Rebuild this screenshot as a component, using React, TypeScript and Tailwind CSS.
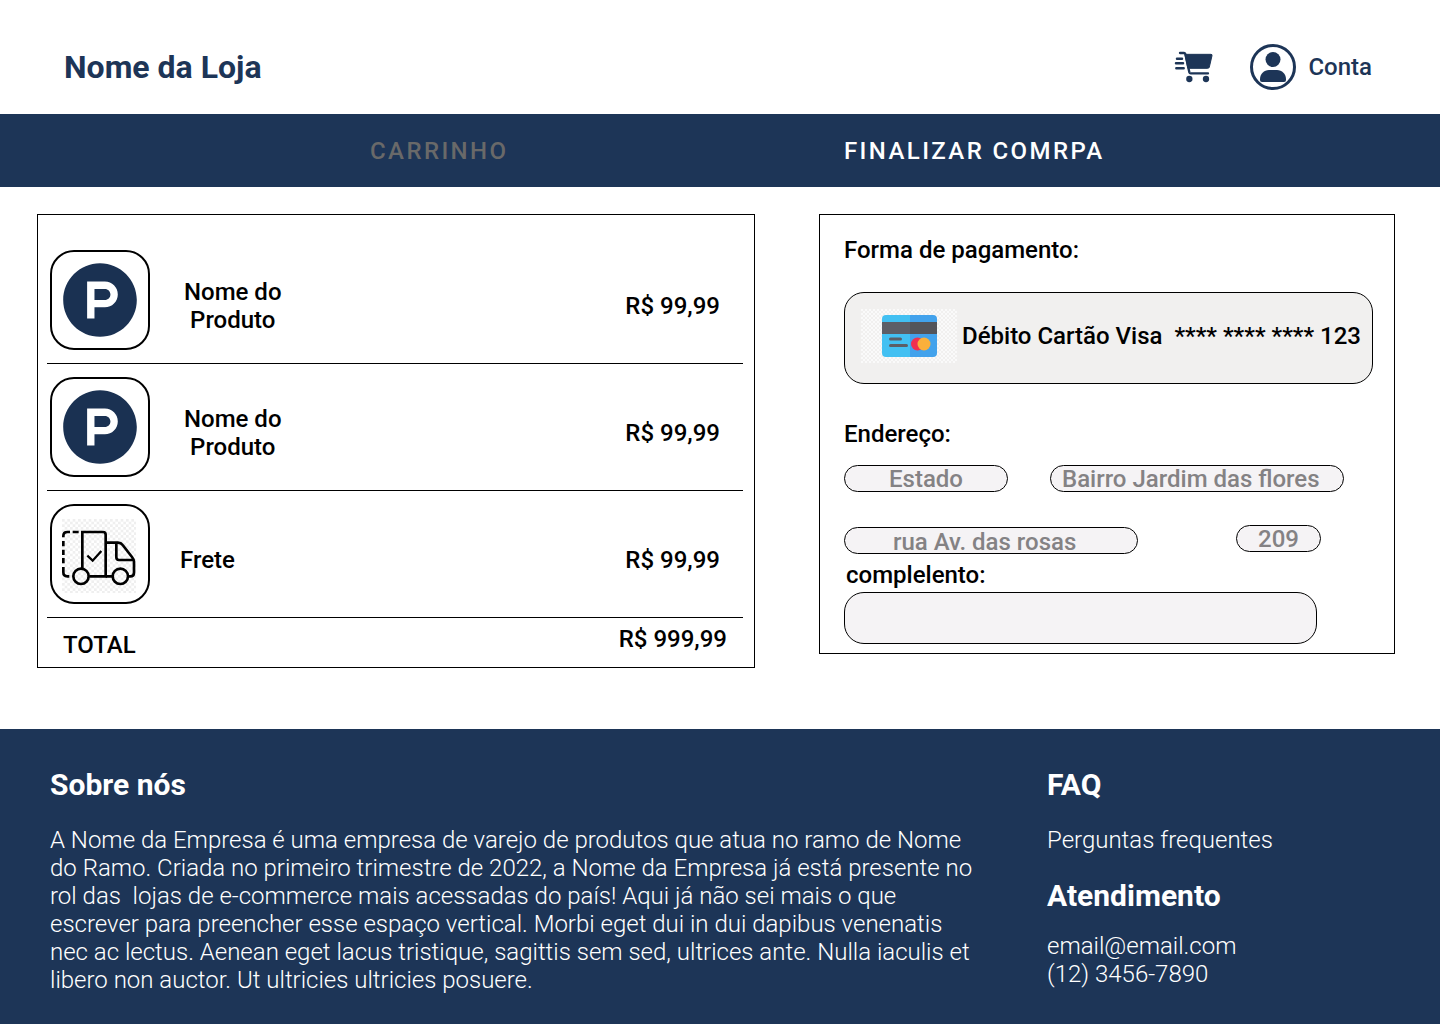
import { FaProductHunt } from "react-icons/fa";
import type { ReactNode } from "react";

function CartIcon() {
  return (
    <svg viewBox="0 0 132 102" className="h-[34px] w-[44px]" fill="none" stroke="currentColor" strokeLinecap="round" strokeLinejoin="round">
      <path d="M24 9h12q3 0 4 3l12 55q1 3 4 3h52" strokeWidth="7" />
      <path d="M40 13H117q4 0 3 4L112 51q-1 4-5 4H49Z" fill="currentColor" strokeWidth="3" />
      <path d="M15 26H30M12 40H33M13 55H35" strokeWidth="7.5" />
      <circle cx="52" cy="87" r="9.5" fill="currentColor" stroke="none" />
      <circle cx="102" cy="87" r="9.5" fill="currentColor" stroke="none" />
    </svg>
  );
}

function AccountIcon() {
  return (
    <svg viewBox="0 0 46 46" className="size-[46px]" fill="currentColor">
      <circle cx="23" cy="23" r="21.5" fill="none" stroke="currentColor" strokeWidth="3" />
      <circle cx="23" cy="15.5" r="7.5" />
      <path d="M10 36v-1c0-5 4-9 9-9h8c5 0 9 4 9 9v1q0 2-2 2H12q-2 0-2-2Z" />
    </svg>
  );
}

function TruckIcon() {
  return (
    <svg viewBox="0 0 222 222" className="mt-[3px] mr-0.5 size-[74px]" fill="none" stroke="#000" strokeWidth="8">
      <defs>
        <pattern id="truck-check" width="16" height="16" patternUnits="userSpaceOnUse">
          <path d="M0 0h8v8H0zM8 8h8v8H8z" fill="#efefef" stroke="none" />
        </pattern>
      </defs>
      <rect width="222" height="222" fill="url(#truck-check)" stroke="none" />
      <path d="M61 148V39h62q8 0 8 8v125H82" />
      <path d="M24 39h-8q-12 0-12 12v4M32 39h18M4 66v16M4 92v16M4 117v16M4 144v16M4 160q0 12 12 12h6" />
      <path d="M131 71h37q9 0 14 7l28 36q6 7 6 14v33q0 11-11 11h-6M163 71v44q0 8 8 8h44M131 172h20" />
      <circle cx="57" cy="172" r="23" />
      <circle cx="175" cy="172" r="23" />
      <path d="M76 110l16 15 26-29" strokeWidth="7" />
    </svg>
  );
}

function CreditCardIcon() {
  return (
    <svg viewBox="0 0 96 54" className="h-[54px] w-24">
      <defs>
        <pattern id="card-check" width="4" height="4" patternUnits="userSpaceOnUse">
          <path d="M0 0h2v2H0zM2 2h2v2H2z" fill="#fafafa" />
        </pattern>
        <clipPath id="card-shape">
          <rect x="21" y="6" width="55" height="42" rx="4" />
        </clipPath>
      </defs>
      <rect width="96" height="54" fill="url(#card-check)" />
      <g clipPath="url(#card-shape)">
        <path d="M21 6h28v42H21z" fill="#42c0f2" />
        <path d="M49 6h27v42H49z" fill="#42a2ec" />
        <path d="M21 13h28v12H21z" fill="#5c5e66" />
        <path d="M49 13h27v12H49z" fill="#53545a" />
      </g>
      <path d="M29.500 30h10M29.500 36.500h16" stroke="#5c5e66" strokeWidth="3" strokeLinecap="round" />
      <circle cx="56.500" cy="35" r="6.500" fill="#f03050" />
      <circle cx="63" cy="35" r="6.500" fill="#fbb03b" />
    </svg>
  );
}

function CartRow({ icon, name, price }: { icon: ReactNode; name: ReactNode; price: string }) {
  return (
    <li className="flex items-center border-b border-black py-[13px] pr-[23px] pl-[3px]">
      <div className="flex size-[100px] shrink-0 items-center justify-center rounded-3xl border-2 border-black">{icon}</div>
      <div className="flex flex-1 items-center justify-between pt-3 pl-[30px]">
        {name}
        <span>{price}</span>
      </div>
    </li>
  );
}

const field = "h-[27px] rounded-full border border-black bg-[#f5f3f5] text-[#848284] outline-none";

export default function App() {
  const product = <FaProductHunt size={76} className="text-[#1a3152]" aria-hidden="true" />;
  const productName = (
    <span className="pl-1 text-center">
      Nome do
      <br />
      Produto
    </span>
  );
  return (
    <div className="flex min-h-screen flex-col bg-white font-['Roboto',sans-serif] text-2xl/7 font-medium text-black">
      <header className="flex items-center justify-between pt-11 pr-[68px] pb-6 pl-16 text-[#1d3557]">
        <h1 className="text-[32px]/9 font-bold">Nome da Loja</h1>
        <div className="flex items-center">
          <button type="button" aria-label="Carrinho">
            <CartIcon />
          </button>
          <a href="#conta" className="ml-[34px] flex items-center gap-3">
            <AccountIcon />
            Conta
          </a>
        </div>
      </header>

      <nav className="grid h-[73px] grid-cols-[474fr_596fr] items-center bg-[#1d3557] pl-[370px] tracking-[0.1em]">
        <a href="#carrinho" className="text-[#696969]">CARRINHO</a>
        <a href="#finalizar" className="text-white">FINALIZAR COMRPA</a>
      </nav>

      <main className="grid grid-cols-[718fr_576fr] items-start gap-16 pt-[27px] pr-[45px] pb-[61px] pl-[37px]">
        <section className="border border-black pt-[22px] pr-[11px] pl-[9px]">
          <ul>
            <CartRow icon={product} name={productName} price="R$ 99,99" />
            <CartRow icon={product} name={productName} price="R$ 99,99" />
            <CartRow icon={<TruckIcon />} name={<span>Frete</span>} price="R$ 99,99" />
          </ul>
          <div className="flex justify-between pt-[7px] pr-4 pb-2 pl-4">
            <span className="pt-1.5">TOTAL</span>
            <span>R$ 999,99</span>
          </div>
        </section>

        <section className="border border-black pt-[21px] pr-[21px] pb-[9px] pl-6">
          <h2>Forma de pagamento:</h2>
          <button type="button" className="mt-7 flex h-[92px] w-full items-center rounded-[20px] border border-black bg-[#f1f0ef] pb-1 pl-4 text-left whitespace-pre">
            <CreditCardIcon />
            <span className="ml-[5px]">Débito Cartão Visa  **** **** **** 123</span>
          </button>
          <h2 className="mt-9">Endereço:</h2>
          <div className="mt-[17px] flex justify-between pr-[29px]">
            <input aria-label="Estado" defaultValue="Estado" className={`${field} w-[164px] text-center`} />
            <input aria-label="Bairro" defaultValue="Bairro Jardim das flores" className={`${field} w-[294px] pl-[11px]`} />
          </div>
          <div className="mt-[33px] flex justify-between pr-[52px]">
            <input aria-label="Rua" defaultValue="rua Av. das rosas" className={`${field} mt-0.5 w-[294px] pt-0.5 pl-12`} />
            <input aria-label="Número" defaultValue="209" className={`${field} w-[85px] text-center`} />
          </div>
          <label htmlFor="complemento" className="mt-[7px] block pl-0.5">complelento:</label>
          <div className="mt-[3px] pr-14">
            <input id="complemento" className="block h-[52px] w-full rounded-[20px] border border-black bg-[#f5f3f5] px-4 text-[#848284] outline-none" />
          </div>
        </section>
      </main>

      <footer className="grid flex-1 grid-cols-[997fr_393fr] bg-[#1d3557] pt-[38px] pb-[30px] pl-[50px] font-light text-white">
        <section>
          <h2 className="text-[30px]/9 font-bold">Sobre nós</h2>
          <p className="mt-[23px] max-w-[930px] whitespace-pre-wrap">A Nome da Empresa é uma empresa de varejo de produtos que atua no ramo de Nome do Ramo. Criada no primeiro trimestre de 2022, a Nome da Empresa já está presente no rol das  lojas de e-commerce mais acessadas do país! Aqui já não sei mais o que escrever para preencher esse espaço vertical. Morbi eget dui in dui dapibus venenatis nec ac lectus. Aenean eget lacus tristique, sagittis sem sed, ultrices ante. Nulla iaculis et libero non auctor. Ut ultricies ultricies posuere.</p>
        </section>
        <section>
          <h2 className="text-[30px]/9 font-bold">FAQ</h2>
          <a href="#faq" className="mt-[23px] block">Perguntas frequentes</a>
          <h2 className="mt-6 text-[30px]/9 font-bold">Atendimento</h2>
          <a href="mailto:email@email.com" className="mt-[18px] block">email@email.com</a>
          <a href="tel:+551234567890" className="block">(12) 3456-7890</a>
        </section>
      </footer>
    </div>
  );
}
